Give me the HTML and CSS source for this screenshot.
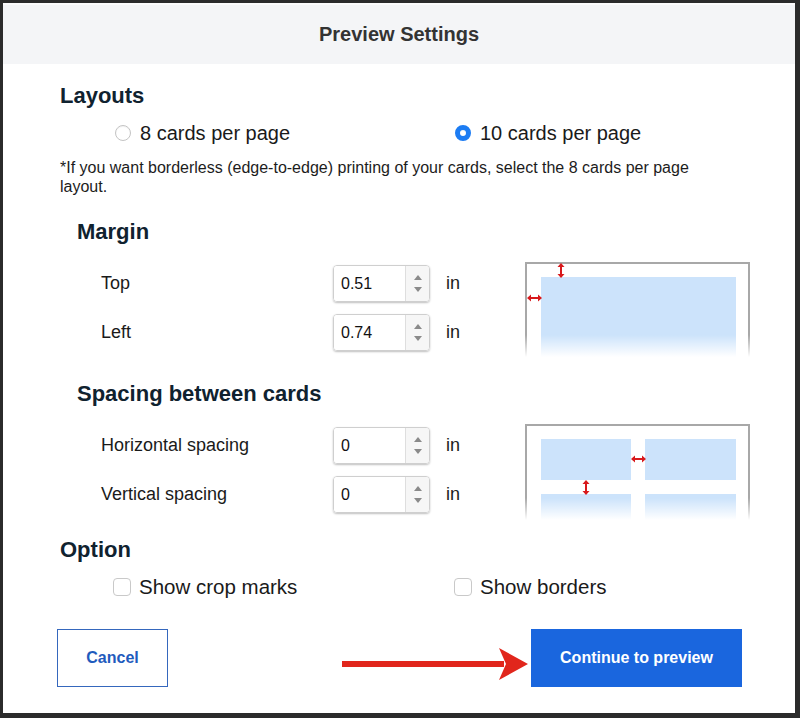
FILE: index.html
```html
<!doctype html>
<html lang="en">
<head>
    <meta charset="UTF-8">
    <title>Preview Settings</title>
    <link rel="stylesheet" href="styles.css">
</head>
<body>
    <div class="dialog">
        <div class="dialog_head">Preview Settings</div>
        <div class="dialog_body">
            <h2 class="title">Layouts</h2>
            <div class="choice_row">
                <label class="choice"><span class="radio"></span>8 cards per page</label>
                <label class="choice"><span class="radio checked"></span>10 cards per page</label>
            </div>
            <p class="note">*If you want borderless (edge-to-edge) printing of your cards, select the 8 cards per page layout.</p>

            <h3 class="title sub">Margin</h3>
            <div class="set_row">
                <div class="fields">
                    <div class="field">
                        <span class="field_name">Top</span>
                        <div class="num"><input type="text" value="0.51"><span class="spin"><i class="up"></i><i class="down"></i></span></div>
                        <span class="unit">in</span>
                    </div>
                    <div class="field">
                        <span class="field_name">Left</span>
                        <div class="num"><input type="text" value="0.74"><span class="spin"><i class="up"></i><i class="down"></i></span></div>
                        <span class="unit">in</span>
                    </div>
                </div>
                <div class="sheet">
                    <div class="card big"></div>
                    <!-- 箭头 -->
                    <svg class="mark v" style="left:30px;top:-1px" width="8" height="15" viewBox="0 0 8 15"><path d="M4 3V12" stroke="#d8191c" stroke-width="2"/><path d="M4 0L7.5 4H0.5Z M4 15L7.5 11H0.5Z" fill="#d8191c"/></svg>
                    <svg class="mark h" style="left:0;top:30px" width="15" height="8" viewBox="0 0 15 8"><path d="M3 4H12" stroke="#d8191c" stroke-width="2"/><path d="M0 4L4 0.5V7.5Z M15 4L11 0.5V7.5Z" fill="#d8191c"/></svg>
                </div>
            </div>

            <h3 class="title sub">Spacing between cards</h3>
            <div class="set_row">
                <div class="fields">
                    <div class="field">
                        <span class="field_name">Horizontal spacing</span>
                        <div class="num"><input type="text" value="0"><span class="spin"><i class="up"></i><i class="down"></i></span></div>
                        <span class="unit">in</span>
                    </div>
                    <div class="field">
                        <span class="field_name">Vertical spacing</span>
                        <div class="num"><input type="text" value="0"><span class="spin"><i class="up"></i><i class="down"></i></span></div>
                        <span class="unit">in</span>
                    </div>
                </div>
                <div class="sheet grid">
                    <div class="card"></div>
                    <div class="card"></div>
                    <div class="card"></div>
                    <div class="card"></div>
                    <svg class="mark h" style="left:104px;top:29px" width="15" height="8" viewBox="0 0 15 8"><path d="M3 4H12" stroke="#d8191c" stroke-width="2"/><path d="M0 4L4 0.5V7.5Z M15 4L11 0.5V7.5Z" fill="#d8191c"/></svg>
                    <svg class="mark v" style="left:55px;top:54px" width="8" height="15" viewBox="0 0 8 15"><path d="M4 3V12" stroke="#d8191c" stroke-width="2"/><path d="M4 0L7.5 4H0.5Z M4 15L7.5 11H0.5Z" fill="#d8191c"/></svg>
                </div>
            </div>

            <h2 class="title opt">Option</h2>
            <div class="choice_row check_row">
                <label class="choice"><span class="box"></span>Show crop marks</label>
                <label class="choice"><span class="box"></span>Show borders</label>
            </div>

            <div class="foot">
                <input type="button" class="btn cancel" value="Cancel">
                <input type="button" class="btn go" value="Continue to preview">
                <svg class="pointer" width="190" height="34" viewBox="0 0 190 34"><path d="M0 14H162V20H0Z" fill="#e1261c"/><path d="M186 17L157 1L164 17L157 33Z" fill="#e1261c"/></svg>
            </div>
        </div>
    </div>
</body>
</html>
```

FILE: styles.css
```css
*{
    padding:0;
    margin:0;
    box-sizing: border-box;
}
body{
    background: #2b2b2b;
    padding: 3px 5px 5px 3px;
    font-family: "Liberation Sans", Arial, sans-serif;
    color: #1b1b1b;
}
.dialog{
    width: 792px;
    height: 710px;
    background: #fff;
}
.dialog_head{
    height: 61px;
    line-height: 59px;
    background: #f4f5f7;
    border-top: 2px solid #fbfbfc;
    text-align: center;
    font-size: 20px;
    font-weight: bold;
    color: #333;
}
.dialog_body{
    padding: 0 57px 0 57px;
}
.title{
    font-size: 22px;
    line-height: 26px;
    font-weight: bold;
    color: #10222f;
}
h2.title{
    margin-top: 19px;
}
.sub{
    padding-left: 17px;
    margin-top: 23px;
}
.sub + .set_row{
    margin-top: 17px;
}
.set_row + .sub{
    margin-top: 24px;
}
h2.opt{
    margin-top: 17px;
}
.choice_row{
    display: flex;
    padding-left: 55px;
    margin-top: 12px;
}
.choice{
    flex: none;
    display: flex;
    align-items: center;
    height: 24px;
    font-size: 20px;
    color: #1a1a1a;
}
.choice:first-child{
    width: 340px;
}
.check_row{
    padding-left: 53px;
}
.check_row .choice{
    font-size: 20.5px;
}
.check_row .choice:first-child{
    width: 341px;
}
.radio{
    width: 16px;
    height: 16px;
    border-radius: 50%;
    border: 1px solid #c4c4c4;
    background: #fff;
    margin-right: 9px;
    box-shadow: inset 0 1px 1px rgba(0,0,0,.05);
}
.radio.checked{
    border: 5px solid #1c7cf3;
    background: #fff;
}
.box{
    width: 18px;
    height: 18px;
    border: 1px solid #c9c9c9;
    border-radius: 4px;
    margin-right: 8px;
    background: #fff;
}
.note{
    margin-top: 13px;
    font-size: 16px;
    line-height: 19px;
    color: #1c1c1c;
}
.set_row{
    display: flex;
    padding-left: 41px;
}
.fields{
    flex: none;
    width: 424px;
    padding-top: 3px;
}
.field{
    display: flex;
    align-items: center;
    height: 37px;
    margin-bottom: 12px;
}
.field:last-child{
    margin-bottom: 0;
}
.field_name{
    width: 232px;
    font-size: 18px;
    color: #1a1a1a;
}
.num{
    display: flex;
    width: 97px;
    height: 37px;
    border: 1px solid #cfcfcf;
    border-radius: 4px;
    box-shadow: 0 1px 2px rgba(0,0,0,.25);
    overflow: hidden;
}
.num input{
    width: 71px;
    border: 0;
    outline: 0;
    padding-left: 7px;
    font-family: "Liberation Sans", Arial, sans-serif;
    font-size: 16px;
    color: #111;
    background: #fff;
}
.spin{
    flex: 1;
    border-left: 1px solid #dedede;
    background: #f6f6f6;
    display: flex;
    flex-direction: column;
    align-items: center;
    justify-content: center;
    gap: 7px;
}
.spin i{
    width: 0;
    height: 0;
    border-left: 4px solid transparent;
    border-right: 4px solid transparent;
}
.spin .up{
    border-bottom: 5px solid #8a8a8a;
}
.spin .down{
    border-top: 5px solid #8a8a8a;
}
.unit{
    margin-left: 16px;
    font-size: 18px;
}
.sheet{
    flex: none;
    position: relative;
    width: 225px;
    height: 95px;
    border: 2px solid #a8a8a8;
    border-bottom: 0;
    padding: 13px 12px 0 14px;
}
.sheet:after{
    content: "";
    position: absolute;
    left: -3px;
    right: -3px;
    bottom: 0;
    height: 22px;
    background: linear-gradient(rgba(255,255,255,0), #fff);
}
.card{
    background: #cce3fb;
}
.card.big{
    height: 100%;
}
.sheet.grid{
    height: 96px;
    display: grid;
    grid-template-columns: 90px 91px;
    grid-template-rows: 41px 1fr;
    column-gap: 14px;
    row-gap: 14px;
}
.mark{
    position: absolute;
    z-index: 1;
}
.foot{
    position: relative;
    display: flex;
    justify-content: space-between;
    margin-top: 30px;
    margin-left: -3px;
}
.btn{
    height: 58px;
    font-family: "Liberation Sans", Arial, sans-serif;
    font-size: 16px;
    font-weight: bold;
    cursor: pointer;
}
.cancel{
    width: 111px;
    border: 1px solid #3567bd;
    background: #fff;
    color: #1f5bbd;
}
.go{
    width: 211px;
    border: 0;
    background: #1a66de;
    color: #fff;
    margin-right: -4px;
}
.pointer{
    position: absolute;
    left: 285px;
    top: 18px;
}
```
